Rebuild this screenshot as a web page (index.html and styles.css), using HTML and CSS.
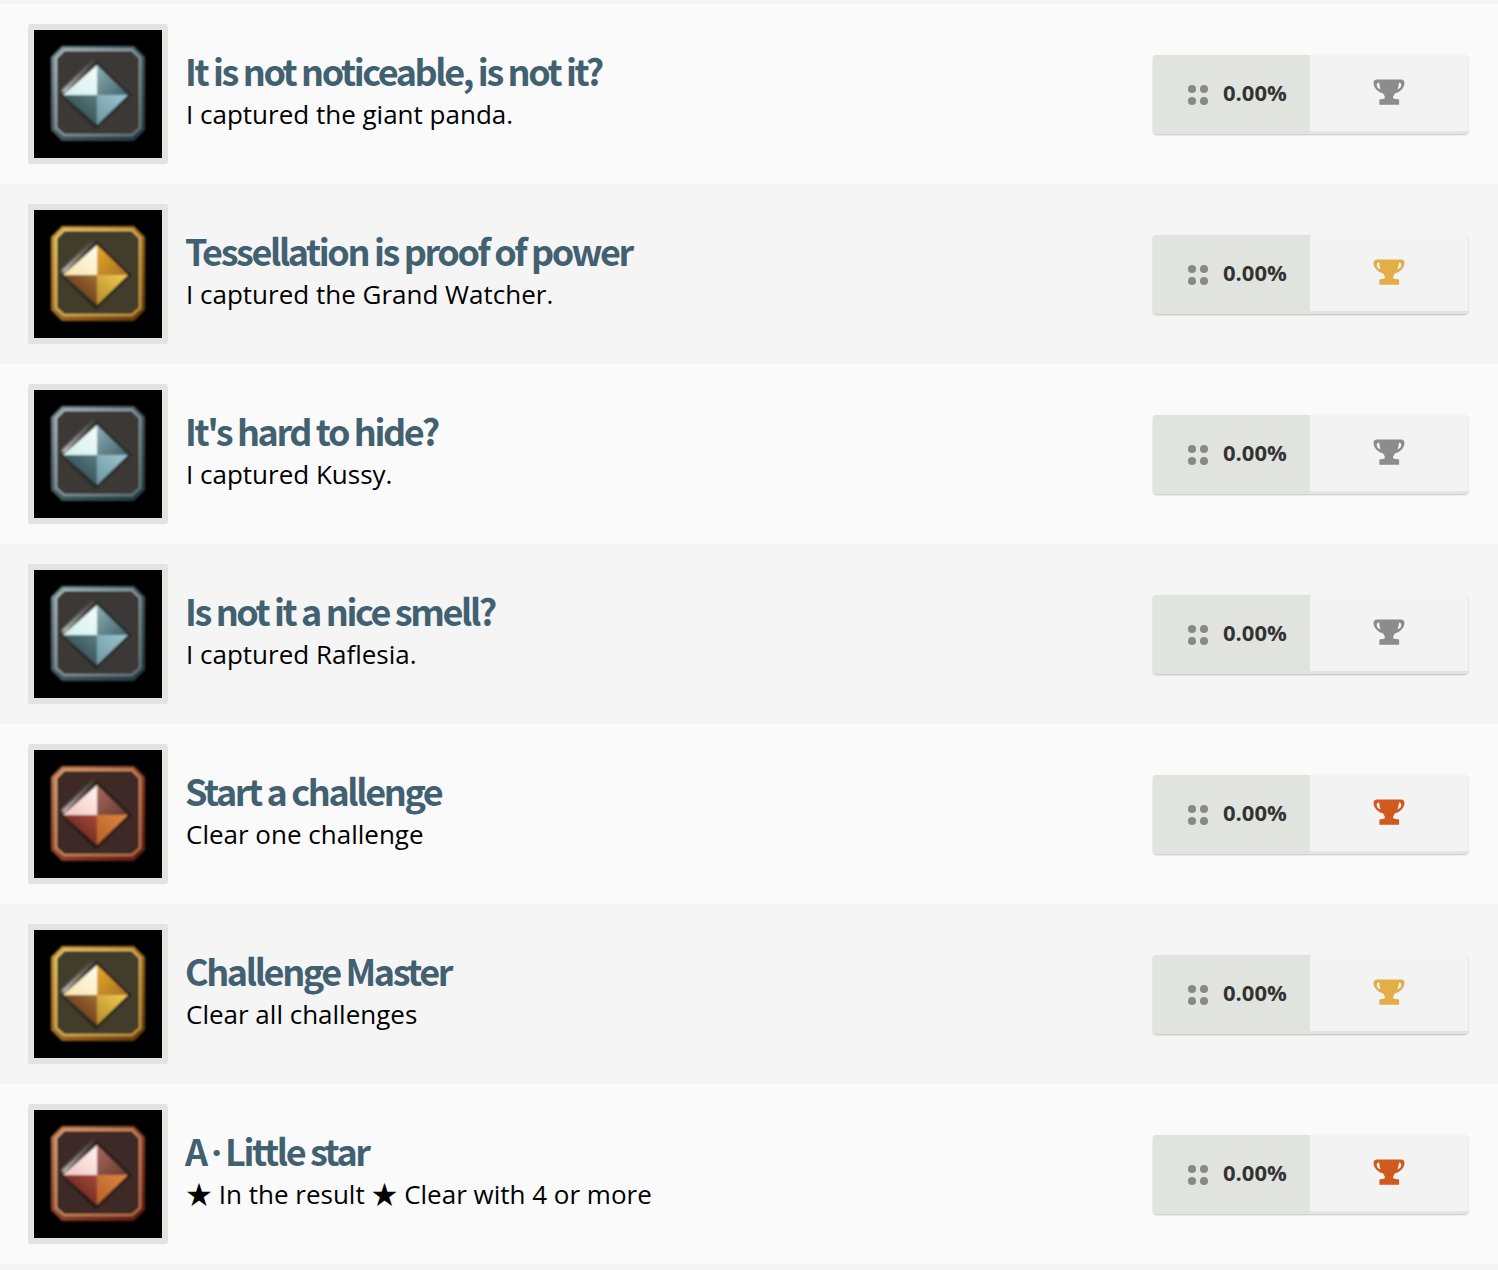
FILE: index.html
```html
<!DOCTYPE html>
<html lang="en">
<head>
<meta charset="utf-8">
<title>Achievements</title>
<link rel="stylesheet" href="styles.css">
</head>
<body>
<svg class="defs" width="0" height="0" aria-hidden="true">
  <defs>
    <filter id="soft" x="-5%" y="-5%" width="110%" height="110%"><feGaussianBlur stdDeviation="0.8"/></filter>
    <filter id="soft2" x="-30%" y="-30%" width="160%" height="160%"><feGaussianBlur stdDeviation="1.3"/></filter>
    <filter id="tiny" x="-10%" y="-10%" width="120%" height="120%"><feGaussianBlur stdDeviation="0.45"/></filter>
    <linearGradient id="glare" gradientUnits="userSpaceOnUse" x1="28" y1="63" x2="62" y2="30"><stop offset="0" stop-color="#fff" stop-opacity=".9"/><stop offset=".5" stop-color="#bbb" stop-opacity=".6"/><stop offset="1" stop-color="#666" stop-opacity=".3"/></linearGradient>

    <linearGradient id="sf" x1="0" y1="0" x2="1" y2="1"><stop offset="0" stop-color="#7d9197"/><stop offset=".5" stop-color="#45585e"/><stop offset="1" stop-color="#223640"/></linearGradient>
    <linearGradient id="sl" x1="0" y1="0" x2="1" y2="1"><stop offset="0" stop-color="#b6c4c6"/><stop offset="1" stop-color="#64777c"/></linearGradient>
    <linearGradient id="s1" x1="0" y1="1" x2="1" y2="0"><stop offset="0" stop-color="#d5f2ee"/><stop offset="1" stop-color="#f2fbfa"/></linearGradient>
    <linearGradient id="s2" x1="0" y1="0" x2="1" y2="1"><stop offset="0" stop-color="#8fb0b6"/><stop offset="1" stop-color="#40626b"/></linearGradient>
    <linearGradient id="s3" x1="1" y1="0" x2="0" y2="1"><stop offset="0" stop-color="#5b7c80"/><stop offset="1" stop-color="#1f3a3e"/></linearGradient>
    <linearGradient id="s4" x1="1" y1="0" x2="0" y2="1"><stop offset="0" stop-color="#9cc6d0"/><stop offset="1" stop-color="#6f97a2"/></linearGradient>

    <linearGradient id="gf" x1="0" y1="0" x2="1" y2="1"><stop offset="0" stop-color="#c99a38"/><stop offset=".55" stop-color="#9c661c"/><stop offset="1" stop-color="#63350c"/></linearGradient>
    <linearGradient id="gl" x1="0" y1="0" x2="1" y2="1"><stop offset="0" stop-color="#f0d278"/><stop offset="1" stop-color="#c9963c"/></linearGradient>
    <linearGradient id="g1" x1="0" y1="1" x2="1" y2="0"><stop offset="0" stop-color="#f5e6a8"/><stop offset="1" stop-color="#fffdf0"/></linearGradient>
    <linearGradient id="g2" x1="0" y1="0" x2="1" y2="1"><stop offset="0" stop-color="#e7a92e"/><stop offset="1" stop-color="#a9701c"/></linearGradient>
    <linearGradient id="g3" x1="1" y1="0" x2="0" y2="1"><stop offset="0" stop-color="#a76d35"/><stop offset="1" stop-color="#3f2110"/></linearGradient>
    <linearGradient id="g4" x1="1" y1="0" x2="0" y2="1"><stop offset="0" stop-color="#f0cd5a"/><stop offset="1" stop-color="#b98a25"/></linearGradient>

    <linearGradient id="bf" x1="0" y1="0" x2="1" y2="1"><stop offset="0" stop-color="#bb7a54"/><stop offset=".55" stop-color="#873e2a"/><stop offset="1" stop-color="#5c1710"/></linearGradient>
    <linearGradient id="bl" x1="0" y1="0" x2="1" y2="1"><stop offset="0" stop-color="#e8a878"/><stop offset="1" stop-color="#bb6f42"/></linearGradient>
    <linearGradient id="b1" x1="0" y1="1" x2="1" y2="0"><stop offset="0" stop-color="#f0c8c0"/><stop offset="1" stop-color="#fff2ee"/></linearGradient>
    <linearGradient id="b2" x1="0" y1="0" x2="1" y2="1"><stop offset="0" stop-color="#a96a60"/><stop offset="1" stop-color="#6a3a30"/></linearGradient>
    <linearGradient id="b3" x1="1" y1="0" x2="0" y2="1"><stop offset="0" stop-color="#a9473a"/><stop offset="1" stop-color="#4a1c16"/></linearGradient>
    <linearGradient id="b4" x1="1" y1="0" x2="0" y2="1"><stop offset="0" stop-color="#e0873f"/><stop offset="1" stop-color="#b5602a"/></linearGradient>

    <g id="glow"><path d="M29 62 L60 31" stroke="url(#glare)" stroke-width="3.500" fill="none" filter="url(#soft2)"/></g>

    <symbol id="badge-silver" viewBox="0 0 128 128">
      <g filter="url(#soft)">
        <polygon points="28,16 100,16 111,27 111,100 100,111 28,111 17,100 17,27" fill="url(#sf)"/>
        <polygon points="30,20 98,20 106,28 106,98 98,105 30,105 22,98 22,28" fill="#3a3836" stroke="url(#sl)" stroke-width="2"/>
        <polygon points="62,30 98,65 62,100 26,65" fill="#2a2927"/>
        <use href="#glow"/>
        <polygon points="63,35 63,65 29,65" fill="url(#s1)"/>
        <polygon points="63,35 94,65 63,65" fill="url(#s2)"/>
        <polygon points="29,65 63,65 63,95" fill="url(#s3)"/>
        <polygon points="94,65 63,65 63,95" fill="url(#s4)"/>
      </g>
    </symbol>
    <symbol id="badge-gold" viewBox="0 0 128 128">
      <g filter="url(#soft)">
        <polygon points="28,16 100,16 111,27 111,100 100,111 28,111 17,100 17,27" fill="url(#gf)"/>
        <polygon points="30,20 98,20 106,28 106,98 98,105 30,105 22,98 22,28" fill="#423c2c" stroke="url(#gl)" stroke-width="2"/>
        <polygon points="62,30 98,65 62,100 26,65" fill="#2a2720"/>
        <use href="#glow"/>
        <polygon points="63,35 63,65 29,65" fill="url(#g1)"/>
        <polygon points="63,35 94,65 63,65" fill="url(#g2)"/>
        <polygon points="29,65 63,65 63,95" fill="url(#g3)"/>
        <polygon points="94,65 63,65 63,95" fill="url(#g4)"/>
      </g>
    </symbol>
    <symbol id="badge-bronze" viewBox="0 0 128 128">
      <g filter="url(#soft)">
        <polygon points="28,16 100,16 111,27 111,100 100,111 28,111 17,100 17,27" fill="url(#bf)"/>
        <polygon points="30,20 98,20 106,28 106,98 98,105 30,105 22,98 22,28" fill="#3c2b26" stroke="url(#bl)" stroke-width="2"/>
        <polygon points="62,30 98,65 62,100 26,65" fill="#261c19"/>
        <use href="#glow"/>
        <polygon points="63,35 63,65 29,65" fill="url(#b1)"/>
        <polygon points="63,35 94,65 63,65" fill="url(#b2)"/>
        <polygon points="29,65 63,65 63,95" fill="url(#b3)"/>
        <polygon points="94,65 63,65 63,95" fill="url(#b4)"/>
      </g>
    </symbol>
    <symbol id="dots" viewBox="0 0 22 22">
      <g filter="url(#tiny)"><circle cx="5" cy="5" r="4"/><circle cx="17" cy="5" r="4"/><circle cx="5" cy="17" r="4"/><circle cx="17" cy="17" r="4"/></g>
    </symbol>
    <symbol id="trophy" viewBox="0 0 30 26" preserveAspectRatio="none">
      <path filter="url(#tiny)" fill-rule="evenodd" d="M4 .5H26C28.500 .5 29.500 2 29.500 4C29.500 9 25.500 13 20.500 14.500C20 15.500 19 16.500 18.800 18.500C19 19.500 20 20 24.500 20.500V25.700H6V20.500C10 20 11 19.500 11.200 18.500C11 16.500 10 15.500 9.500 14.500C4.500 13 .5 9 .5 4C.5 2 1.500 .5 4 .5ZM5.500 3.500C4.300 3.500 3.500 4.500 3.500 6C3.500 8 5 9.800 7 10.300C6.300 8.300 6 6 5.800 3.500ZM24.500 3.500C24 6 23.700 8.300 23 10.300C25 9.800 26.500 8 26.500 6C26.500 4.500 25.700 3.500 24.500 3.500Z"/>
    </symbol>
  </defs>
</svg>

<main class="list">
  <article class="row">
    <div class="thumb"><svg class="badge"><use href="#badge-silver"/></svg></div>
    <div class="text"><h2 class="title">It is not noticeable, is not it?</h2><p class="desc">I captured the giant panda.</p></div>
    <div class="stat"><div class="rate"><svg class="dots"><use href="#dots"/></svg><span class="pct">0.00%</span></div><div class="tier"><svg class="trophy silver"><use href="#trophy"/></svg></div></div>
  </article>
  <article class="row">
    <div class="thumb"><svg class="badge"><use href="#badge-gold"/></svg></div>
    <div class="text"><h2 class="title">Tessellation is proof of power</h2><p class="desc">I captured the Grand Watcher.</p></div>
    <div class="stat"><div class="rate"><svg class="dots"><use href="#dots"/></svg><span class="pct">0.00%</span></div><div class="tier"><svg class="trophy gold"><use href="#trophy"/></svg></div></div>
  </article>
  <article class="row">
    <div class="thumb"><svg class="badge"><use href="#badge-silver"/></svg></div>
    <div class="text"><h2 class="title">It's hard to hide?</h2><p class="desc">I captured Kussy.</p></div>
    <div class="stat"><div class="rate"><svg class="dots"><use href="#dots"/></svg><span class="pct">0.00%</span></div><div class="tier"><svg class="trophy silver"><use href="#trophy"/></svg></div></div>
  </article>
  <article class="row">
    <div class="thumb"><svg class="badge"><use href="#badge-silver"/></svg></div>
    <div class="text"><h2 class="title">Is not it a nice smell?</h2><p class="desc">I captured Raflesia.</p></div>
    <div class="stat"><div class="rate"><svg class="dots"><use href="#dots"/></svg><span class="pct">0.00%</span></div><div class="tier"><svg class="trophy silver"><use href="#trophy"/></svg></div></div>
  </article>
  <article class="row">
    <div class="thumb"><svg class="badge"><use href="#badge-bronze"/></svg></div>
    <div class="text"><h2 class="title">Start a challenge</h2><p class="desc">Clear one challenge</p></div>
    <div class="stat"><div class="rate"><svg class="dots"><use href="#dots"/></svg><span class="pct">0.00%</span></div><div class="tier"><svg class="trophy bronze"><use href="#trophy"/></svg></div></div>
  </article>
  <article class="row">
    <div class="thumb"><svg class="badge"><use href="#badge-gold"/></svg></div>
    <div class="text"><h2 class="title">Challenge Master</h2><p class="desc">Clear all challenges</p></div>
    <div class="stat"><div class="rate"><svg class="dots"><use href="#dots"/></svg><span class="pct">0.00%</span></div><div class="tier"><svg class="trophy gold"><use href="#trophy"/></svg></div></div>
  </article>
  <article class="row">
    <div class="thumb"><svg class="badge"><use href="#badge-bronze"/></svg></div>
    <div class="text"><h2 class="title">A <span class="mid">·</span> Little star</h2><p class="desc">★ In the result ★ Clear with 4 or more</p></div>
    <div class="stat"><div class="rate"><svg class="dots"><use href="#dots"/></svg><span class="pct">0.00%</span></div><div class="tier"><svg class="trophy bronze"><use href="#trophy"/></svg></div></div>
  </article>
</main>
</body>
</html>
```

FILE: styles.css
```css
* { box-sizing: border-box; }
html, body { margin: 0; padding: 0; }
body {
  background: #f5f5f5;
  font-family: "Open Sans", "Noto Sans CJK JP", sans-serif;
  color: #000;
}
.defs { display: block; height: 0; }
.list { display: flex; flex-direction: column; padding-top: 4px; }
.row {
  display: flex;
  align-items: center;
  height: 180px;
  padding: 0 30px 0 28px;
  background: #fafafa;
}
.row:nth-child(even) { background: #f5f5f5; }
.thumb {
  flex: none;
  width: 140px;
  height: 140px;
  border: 6px solid #e3e3e2;
  border-radius: 3px;
  background: #000;
}
.badge { display: block; width: 128px; height: 128px; }
.text { flex: 1; min-width: 0; padding: 0 0 6px 18px; }
.title {
  margin: 0 0 2px -1px;
  height: 44px;
  font-family: "Noto Sans CJK JP", "Noto Sans", sans-serif;
  font-size: 36px;
  font-weight: 700;
  line-height: 44px;
  letter-spacing: -2.4px;
  color: #416070;
}
.mid { font-family: "Open Sans", sans-serif; }
.desc {
  margin: 0;
  height: 40px;
  font-size: 26px;
  line-height: 40px;
}
.stat {
  flex: none;
  display: flex;
  width: 315px;
  height: 79px;
  border-radius: 4px;
  overflow: hidden;
  box-shadow: 0 1px 2px rgba(0, 0, 0, .22);
  background: #e4e4e2;
}
.rate {
  display: flex;
  align-items: center;
  width: 157px;
  height: 79px;
  padding: 0 0 4px 34px;
  background: #e1e3df;
}
.dots { width: 22px; height: 22px; fill: #888; margin: 5px 14px 0 0; }
.pct { font-size: 22px; font-weight: 700; color: #333; line-height: 1; }
.tier {
  flex: 1;
  display: flex;
  justify-content: center;
  height: 76px;
  padding: 24px 0 0 0;
  background: #f3f3f3;
}
.trophy { width: 32px; height: 26px; }
.trophy.silver { fill: #8c8c8c; }
.trophy.gold { fill: #e2ae4a; }
.trophy.bronze { fill: #cf5a1f; }
```
